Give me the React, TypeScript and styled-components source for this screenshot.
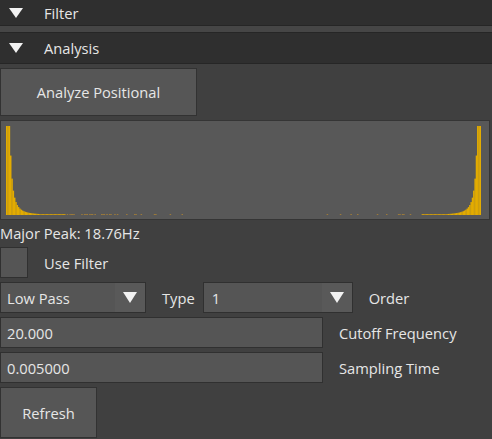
import React from 'react';
import styled, { createGlobalStyle } from 'styled-components';

const GlobalStyle = createGlobalStyle`
  html, body {
    margin: 0;
    padding: 0;
    background: #404040;
  }
  body {
    font-family: 'Open Sans', 'Noto Sans', sans-serif;
    font-size: 14.7px;
    color: #e6e6e6;
  }
`;

const Panel = styled.div`
  width: 492px;
  height: 439px;
  overflow: hidden;
  background: #404040;
  display: flex;
  flex-direction: column;
`;

const Header = styled.div<{ $first?: boolean }>`
  height: ${p => (p.$first ? 25 : 30)}px;
  background: #2f2f2f;
  border-top: ${p => (p.$first ? 'none' : '1px solid #262626')};
  border-bottom: 1px solid #262626;
  display: flex;
  align-items: center;
  padding-left: 9px;
  gap: 21px;
  flex-shrink: 0;
`;

const HeaderGap = styled.div`
  height: 6px;
  background: #464646;
  flex-shrink: 0;
`;

const Arrow = styled.span<{ $size?: number }>`
  width: 0;
  height: 0;
  border-left: ${p => (p.$size ?? 14) / 2}px solid transparent;
  border-right: ${p => (p.$size ?? 14) / 2}px solid transparent;
  border-top: ${p => (p.$size ?? 14) * 0.75}px solid #f2f2f2;
`;

const Body = styled.div`
  display: flex;
  flex-direction: column;
  gap: 4px;
  padding-top: 4px;
`;

const Button = styled.button<{ $w: number; $h: number }>`
  width: ${p => p.$w}px;
  height: ${p => p.$h}px;
  background: #565656;
  border: 1px solid #323232;
  color: #e6e6e6;
  font: inherit;
  padding: 0;
`;

const Plot = styled.div`
  width: 490px;
  height: 100px;
  box-sizing: border-box;
  background: #585858;
  border: 1px solid #353535;
  padding: 5px 8px 4px 5px;
  display: flex;
`;

const Text = styled.div`
  height: 19px;
  line-height: 19px;
`;

const Row = styled.div`
  display: flex;
  align-items: center;
  gap: 16px;
`;

const Frame = styled.div<{ $w: number }>`
  width: ${p => p.$w}px;
  height: 31px;
  box-sizing: border-box;
  background: #555555;
  border: 1px solid #303030;
  display: flex;
  align-items: center;
  flex-shrink: 0;
`;

const FrameText = styled.span<{ $pad?: number }>`
  flex: 1;
  padding-left: ${p => p.$pad ?? 6}px;
`;

const ComboButton = styled.span`
  width: 30px;
  align-self: stretch;
  background: #595959;
  display: flex;
  align-items: center;
  justify-content: center;
`;

const Label = styled.span<{ $tight?: boolean }>`
  white-space: nowrap;
  margin-right: ${p => (p.$tight ? -8 : 0)}px;
`;

const BAR_COUNT = 360;
const PLOT_W = 475;
const PLOT_H = 89;

function magnitude(k: number) {
  if (k < 3) return 1;
  return Math.min(1, 14.1 / Math.pow(k + 1, 2.2));
}

function noise(i: number) {
  const x = Math.sin(i * 12.9898) * 43758.5453;
  return x - Math.floor(x);
}

const Histogram: React.FC = () => {
  const bw = PLOT_W / BAR_COUNT;
  const bars: React.ReactNode[] = [];
  for (let i = 0; i < BAR_COUNT; i++) {
    const k = Math.min(i, BAR_COUNT - 1 - i);
    let h = magnitude(k) * PLOT_H;
    let fill = '#e3ac00';
    if (h < 1) {
      const chance = 0.5 * (1 - k / 150);
      if (k < 45) {
        h = 1;
        fill = '#c9980f';
      } else if (noise(i) < chance) {
        h = 1;
        fill = '#9c7a3a';
      } else continue;
    }
    bars.push(
      <rect key={i} x={i * bw} y={PLOT_H - h} width={bw + 0.2} height={h} fill={fill} />
    );
  }
  return (
    <svg width={PLOT_W} height={PLOT_H} viewBox={`0 0 ${PLOT_W} ${PLOT_H}`}>
      {bars}
    </svg>
  );
};

const App: React.FC = () => (
  <>
    <GlobalStyle />
    <Panel>
      <Header $first>
        <Arrow />
        <span>Filter</span>
      </Header>
      <HeaderGap />
      <Header>
        <Arrow />
        <span>Analysis</span>
      </Header>
      <Body>
        <Button $w={197} $h={48}>Analyze Positional</Button>
        <Plot>
          <Histogram />
        </Plot>
        <Text>Major Peak: 18.76Hz</Text>
        <Row>
          <Frame $w={28} />
          <Label>Use Filter</Label>
        </Row>
        <Row>
          <Frame $w={146}>
            <FrameText>Low Pass</FrameText>
            <ComboButton><Arrow $size={15} /></ComboButton>
          </Frame>
          <Label $tight>Type</Label>
          <Frame $w={150}>
            <FrameText $pad={8}>1</FrameText>
            <ComboButton><Arrow $size={15} /></ComboButton>
          </Frame>
          <Label>Order</Label>
        </Row>
        <Row>
          <Frame $w={323}>
            <FrameText>20.000</FrameText>
          </Frame>
          <Label>Cutoff Frequency</Label>
        </Row>
        <Row>
          <Frame $w={323}>
            <FrameText>0.005000</FrameText>
          </Frame>
          <Label>Sampling Time</Label>
        </Row>
        <Button $w={97} $h={51}>Refresh</Button>
      </Body>
    </Panel>
  </>
);

export default App;
